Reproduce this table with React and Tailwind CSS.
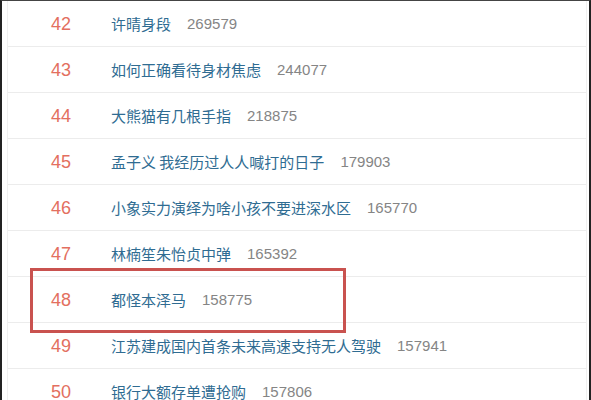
import React from "react";

const rows = [
  ["42", "许晴身段", "269579"],
  ["43", "如何正确看待身材焦虑", "244077"],
  ["44", "大熊猫有几根手指", "218875"],
  ["45", "孟子义 我经历过人人喊打的日子", "179903"],
  ["46", "小象实力演绎为啥小孩不要进深水区", "165770"],
  ["47", "林楠笙朱怡贞中弹", "165392"],
  ["48", "都怪本泽马", "158775"],
  ["49", "江苏建成国内首条未来高速支持无人驾驶", "157941"],
  ["50", "银行大额存单遭抢购", "157806"],
];

export default function App() {
  return (
    <div className="relative w-[591px] h-[400px] overflow-hidden bg-white border-t border-t-[#444] border-l-2 border-l-[#222] border-r-2 border-r-[#222]">
      <div className="ml-[5px] mr-[2px] h-full border-l border-r border-[#f0f0f0]">
        {rows.map(([n, t, c]) => (
          <div
            key={n}
            className="h-[46px] flex items-center border-b border-[#ececec]"
          >
            <div
              className="w-[103px] pl-[43px] text-[18px] text-[#e36f60] leading-none"
              style={{ fontFamily: '"Liberation Sans", Arial, sans-serif' }}
            >
              {n}
            </div>
            <div
              className="text-[15px] text-[#2f6c92] leading-none"
              style={{ fontFamily: '"Noto Sans CJK SC", sans-serif' }}
            >
              {t}
            </div>
            <div
              className="ml-[16px] text-[15px] text-[#858585] leading-none"
              style={{ fontFamily: '"Liberation Sans", Arial, sans-serif' }}
            >
              {c}
            </div>
          </div>
        ))}
      </div>
      <div className="absolute left-[28px] top-[267px] w-[316px] h-[65px] border-[3px] border-[#c9524f]" />
    </div>
  );
}
